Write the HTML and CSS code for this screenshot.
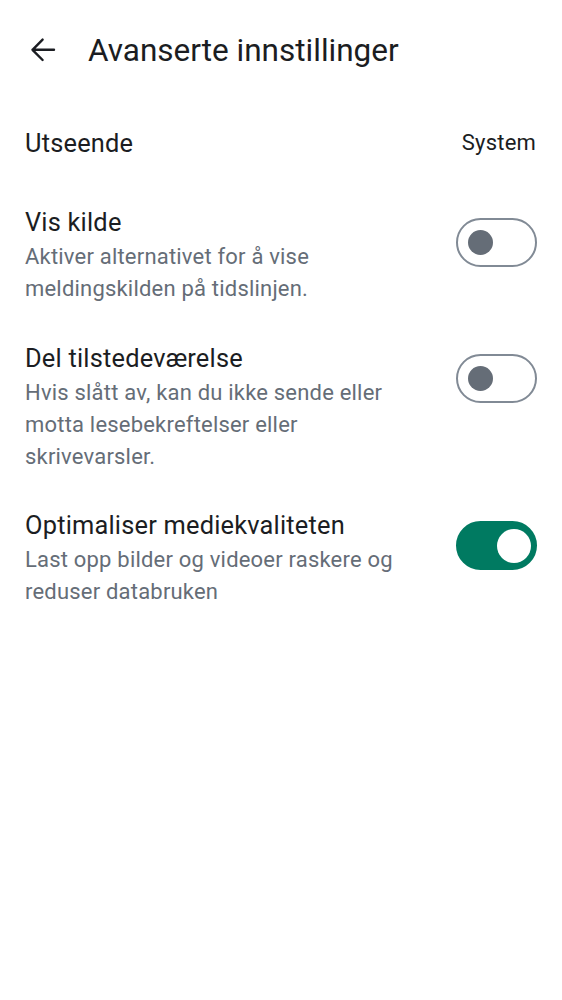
FILE: index.html
```html
<!DOCTYPE html>
<html lang="no">
<head>
<meta charset="utf-8">
<link rel="stylesheet" href="styles.css">
</head>
<body>
<header class="topbar">
  <button class="back" aria-label="Tilbake">
    <svg width="26" height="26" viewBox="0 0 26 26"><path d="M2.5 12.8H24M12.6 2.6L2.5 12.8L12.6 23" fill="none" stroke="#1b1d22" stroke-width="2.4" stroke-linecap="round" stroke-linejoin="round"/></svg>
  </button>
  <h1 class="title">Avanserte innstillinger</h1>
</header>
<main class="list">
  <div class="row single">
    <div class="label">Utseende</div>
    <div class="value">System</div>
  </div>
  <div class="row">
    <div class="text">
      <div class="label">Vis kilde</div>
      <div class="sub">Aktiver alternativet for å vise meldingskilden på tidslinjen.</div>
    </div>
    <div class="switch"><span class="knob"></span></div>
  </div>
  <div class="row">
    <div class="text">
      <div class="label">Del tilstedeværelse</div>
      <div class="sub">Hvis slått av, kan du ikke sende eller motta lesebekreftelser eller skrivevarsler.</div>
    </div>
    <div class="switch"><span class="knob"></span></div>
  </div>
  <div class="row">
    <div class="text">
      <div class="label">Optimaliser mediekvaliteten</div>
      <div class="sub">Last opp bilder og videoer raskere og reduser databruken</div>
    </div>
    <div class="switch on"><span class="knob"></span></div>
  </div>
</main>
</body>
</html>
```
FILE: styles.css
```css
* { box-sizing: border-box; }
body {
  margin: 0;
  background: #ffffff;
  font-family: Roboto, "Noto Sans", sans-serif;
  color: #1b1d22;
}
.topbar {
  height: 100px;
  display: flex;
  align-items: center;
  padding-left: 30px;
}
.back {
  border: 0;
  background: none;
  padding: 0;
  width: 26px;
  height: 26px;
  display: flex;
  margin-right: 32px;
}
.title {
  margin: 0;
  font-size: 31.5px;
  font-weight: 400;
  letter-spacing: 0;
}
.list { display: flex; flex-direction: column; }
.row {
  display: flex;
  align-items: flex-start;
  justify-content: space-between;
  padding: 20px 25px 15.5px 25px;
  gap: 20px;
}
.row.single {
  padding-top: 26px;
  padding-bottom: 0;
  height: 85px;
  padding-right: 26px;
}
.label {
  font-size: 25.4px;
  line-height: 34px;
  letter-spacing: 0.2px;
}
.value {
  font-size: 22px;
  line-height: 34px;
  letter-spacing: 0.2px;
}
.text { flex: 1; max-width: 400px; }
.sub {
  margin-top: 2px;
  font-size: 22px;
  line-height: 32px;
  color: #656d77;
  letter-spacing: 0.2px;
}
.switch {
  flex: none;
  width: 81px;
  height: 49px;
  margin-top: 13px;
  border-radius: 25px;
  border: 2.5px solid #818a95;
  display: flex;
  align-items: center;
  padding-left: 10px;
}
.knob {
  width: 25px;
  height: 25px;
  border-radius: 50%;
  background: #656d77;
}
.switch.on {
  background: #007a61;
  border-color: #007a61;
  justify-content: flex-end;
  padding-right: 4px;
}
.switch.on .knob {
  width: 34px;
  height: 34px;
  background: #ffffff;
}
```
